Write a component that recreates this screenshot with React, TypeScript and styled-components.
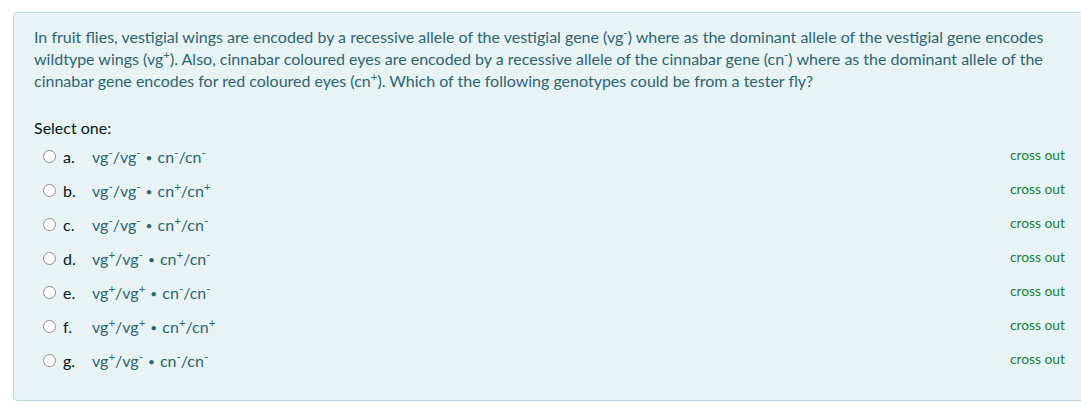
import { createGlobalStyle } from 'styled-components';
import styled from 'styled-components';

const GlobalStyle = createGlobalStyle`
	html, body {
		margin: 0;
		padding: 0;
		overflow: hidden;
		background: #ffffff;
	}
	body {
		font-family: 'Lato', 'Open Sans', sans-serif;
	}
`;

const Page = styled.div`
	padding: 12px 0 0 13px;
	width: 1200px;
`;

const Formulation = styled.div`
	width: 1031px;
	background: #e7f3f5;
	border: 1px solid #b8dce2;
	border-radius: 4px;
	padding: 13px 20px 23px 20px;
	color: #2f6473;
`;

const QuestionText = styled.div`
	font-size: 16px;
	line-height: 22px;
	white-space: nowrap;
`;

const Sup = styled.sup`
	font-size: 11.5px;
	line-height: 0;
	vertical-align: 6px;
`;

const Prompt = styled.div`
	margin-top: 25px;
	font-size: 16px;
	line-height: 22px;
	color: #001a1e;
`;

const AnswerList = styled.div`
	display: flex;
	flex-direction: column;
`;

const AnswerRow = styled.div`
	height: 34px;
	display: flex;
	align-items: center;
	padding-left: 9px;
`;

const Radio = styled.span`
	width: 11px;
	height: 11px;
	border-radius: 50%;
	border: 1.5px solid #8c8c8c;
	background: #ffffff;
	flex: none;
`;

const Letter = styled.span`
	margin-left: 7px;
	width: 29px;
	font-size: 16px;
	color: #001a1e;
`;

const AnswerText = styled.span`
	flex: 1;
	font-size: 16px;
	color: #2f6473;
`;

const Bullet = styled.span`
	margin: 0 5px;
	font-size: 12px;
	vertical-align: 1px;
`;

const CrossOut = styled.span`
	margin-bottom: 3px;
	font-size: 13.8px;
	color: #188038;
`;

type Allele = '+' | '-';

const answers: { letter: string; vg: [Allele, Allele]; cn: [Allele, Allele] }[] = [
	{ letter: 'a.', vg: ['-', '-'], cn: ['-', '-'] },
	{ letter: 'b.', vg: ['-', '-'], cn: ['+', '+'] },
	{ letter: 'c.', vg: ['-', '-'], cn: ['+', '-'] },
	{ letter: 'd.', vg: ['+', '-'], cn: ['+', '-'] },
	{ letter: 'e.', vg: ['+', '+'], cn: ['-', '-'] },
	{ letter: 'f.', vg: ['+', '+'], cn: ['+', '+'] },
	{ letter: 'g.', vg: ['+', '-'], cn: ['-', '-'] },
];

const Gene = ({ name, alleles }: { name: string; alleles: [Allele, Allele] }) => (
	<>
		{name}
		<Sup>{alleles[0]}</Sup>/{name}
		<Sup>{alleles[1]}</Sup>
	</>
);

export default function App() {
	return (
		<>
			<GlobalStyle />
			<Page>
				<Formulation>
					<QuestionText>
						In fruit flies, vestigial wings are encoded by a recessive allele of the vestigial gene (vg
						<Sup>-</Sup>) where as the dominant allele of the vestigial gene encodes
						<br />
						wildtype wings (vg<Sup>+</Sup>). Also, cinnabar coloured eyes are encoded by a recessive allele
						of the cinnabar gene (cn<Sup>-</Sup>) where as the dominant allele of the
						<br />
						cinnabar gene encodes for red coloured eyes (cn<Sup>+</Sup>). Which of the following genotypes
						could be from a tester fly?
					</QuestionText>
					<Prompt>Select one:</Prompt>
					<AnswerList>
						{answers.map((a) => (
							<AnswerRow key={a.letter}>
								<Radio />
								<Letter>{a.letter}</Letter>
								<AnswerText>
									<Gene name="vg" alleles={a.vg} />
									<Bullet>•</Bullet>
									<Gene name="cn" alleles={a.cn} />
								</AnswerText>
								<CrossOut>cross out</CrossOut>
							</AnswerRow>
						))}
					</AnswerList>
				</Formulation>
			</Page>
		</>
	);
}
